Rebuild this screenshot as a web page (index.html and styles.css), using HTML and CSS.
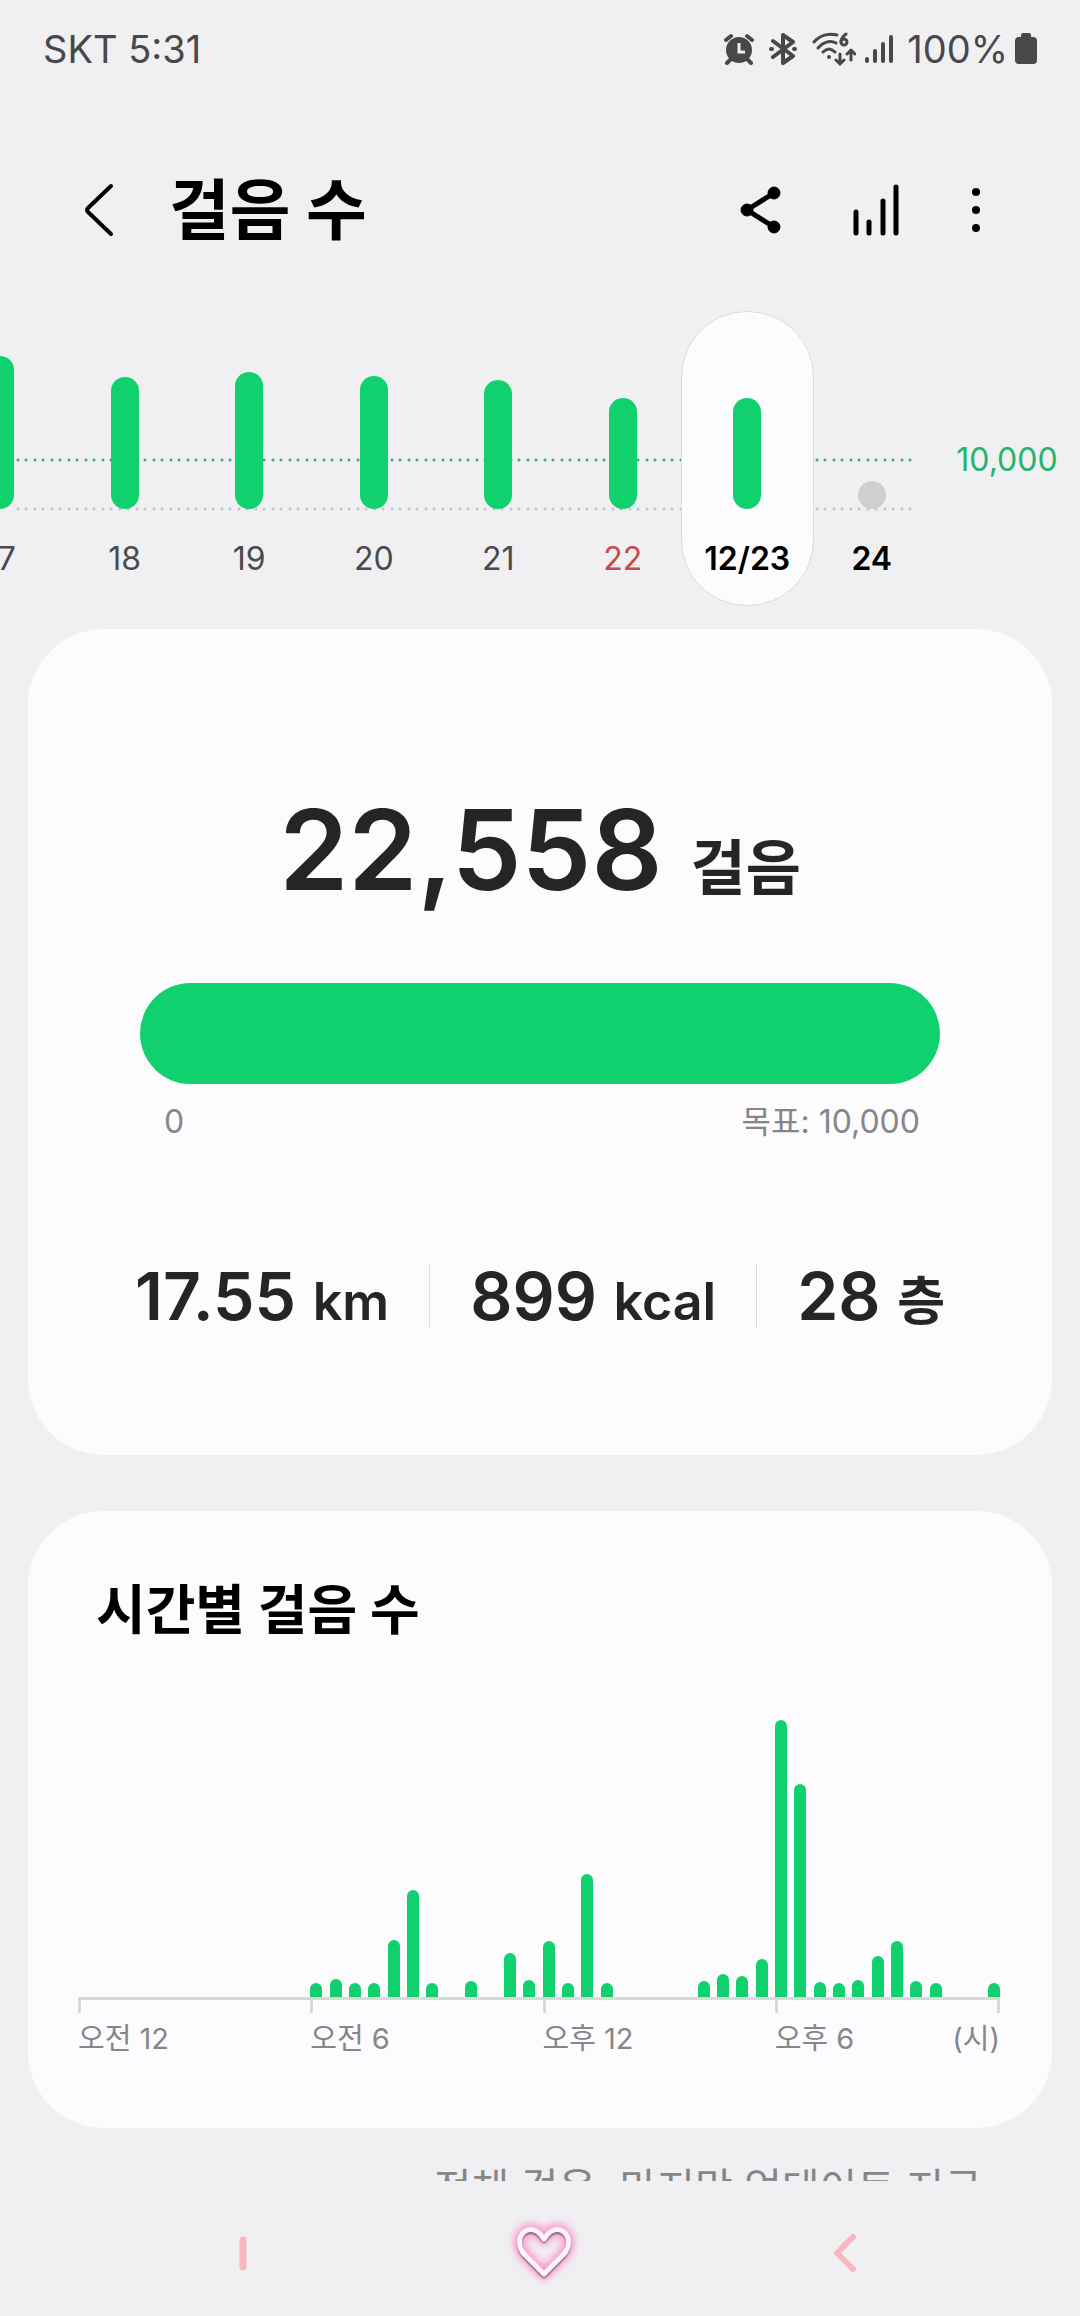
FILE: index.html
```html
<!DOCTYPE html>
<html lang="ko">
<head>
<meta charset="utf-8">
<meta name="viewport" content="width=device-width, initial-scale=1">
<title>걸음 수</title>
<link rel="stylesheet" href="styles.css">
</head>
<body>
<div class="app">
  <div class="status">
    <span class="status-text">SKT 5:31</span>
    <div class="status-icons">
      <svg class="icon-alarm" width="30" height="32" viewBox="0 0 30 32" aria-hidden="true">
        <circle cx="15" cy="17" r="13" fill="currentColor"/>
        <path d="M2 7 7 3M28 7 23 3M6 27 3 30M24 27 27 30" stroke="currentColor" stroke-width="4" stroke-linecap="round"/>
        <path d="M15 10v9h6" fill="none" stroke="#f0f0f2" stroke-width="3"/>
      </svg>
      <svg class="icon-bt" width="28" height="32" viewBox="0 0 28 32" fill="none" stroke="currentColor" stroke-width="4" stroke-linejoin="round" stroke-linecap="round" aria-hidden="true">
        <path d="M4 8 24 23 14 30V2L24 9 4 24"/>
        <path d="M2 16h1M25 16h1"/>
      </svg>
      <svg class="icon-wifi" width="44" height="34" viewBox="0 0 44 34" fill="none" stroke="currentColor" stroke-width="3" stroke-linecap="round" stroke-linejoin="round" aria-hidden="true">
        <path d="M2 10C8 3 17 1 25 3M6 16c5-6 12-8 18-5M11 20c4-4 8-4 12 0"/>
        <circle cx="17" cy="25" r="2" fill="currentColor" stroke="none"/>
        <path d="M34 2c-4 3-5 5-5 8"/><circle cx="32" cy="10" r="3"/>
        <path d="M28 22v10M24 28l4 4 4-4M39 28V19M35 22l4-4 4 4"/>
      </svg>
      <svg class="icon-signal" width="28" height="30" viewBox="0 0 28 30" stroke="currentColor" stroke-width="4" stroke-linecap="round" aria-hidden="true">
        <path d="M2 25v2M10 17v10M18 10v17M26 3v24"/>
      </svg>
      <span class="status-text">100%</span>
      <svg class="icon-battery" width="22" height="32" viewBox="0 0 22 32" fill="currentColor" aria-hidden="true">
        <rect x="6" y="0" width="10" height="8" rx="2"/><rect x="0" y="4" width="22" height="27" rx="4"/>
      </svg>
    </div>
  </div>

  <header class="header">
    <button class="icon-button" type="button" aria-label="뒤로">
      <svg width="32" height="56" viewBox="0 0 32 56" fill="none" stroke="currentColor" stroke-width="4" stroke-linecap="round" stroke-linejoin="round"><path d="M28 4 5 26q-2 2 0 4L28 52"/></svg>
    </button>
    <h1 class="title">걸음 수</h1>
    <div class="actions">
      <button class="icon-button" type="button" aria-label="공유">
        <svg width="42" height="48" viewBox="0 0 42 48" fill="currentColor" stroke="currentColor"><path d="M34 7 7 24 34 41" fill="none" stroke-width="5"/><circle cx="34" cy="7" r="6"/><circle cx="7" cy="24" r="6"/><circle cx="34" cy="41" r="6"/></svg>
      </button>
      <button class="icon-button" type="button" aria-label="통계">
        <svg width="48" height="52" viewBox="0 0 48 52" fill="none" stroke="currentColor" stroke-width="5" stroke-linecap="round"><path d="M4 28v21M17 38v11M31 17v32M44 3v46"/></svg>
      </button>
      <button class="icon-button" type="button" aria-label="더보기">
        <svg width="12" height="48" viewBox="0 0 12 48" fill="currentColor"><circle cx="6" cy="6" r="4"/><circle cx="6" cy="24" r="4"/><circle cx="6" cy="42" r="4"/></svg>
      </button>
    </div>
  </header>

  <main class="content">
    <section class="strip" aria-label="일별 걸음 수">
      <div class="days">
        <svg class="guides" aria-hidden="true">
          <line class="guide-goal" x1="18" y1="150" x2="100%" y2="150"/>
          <line class="guide-base" x1="18" y1="199" x2="100%" y2="199"/>
        </svg>
        <button class="day" type="button"><span class="plot"><span class="bar" style="height:153px"></span></span><span class="date">17</span></button>
        <button class="day" type="button"><span class="plot"><span class="bar" style="height:132px"></span></span><span class="date">18</span></button>
        <button class="day" type="button"><span class="plot"><span class="bar" style="height:137px"></span></span><span class="date">19</span></button>
        <button class="day" type="button"><span class="plot"><span class="bar" style="height:133px"></span></span><span class="date">20</span></button>
        <button class="day" type="button"><span class="plot"><span class="bar" style="height:129px"></span></span><span class="date">21</span></button>
        <button class="day sunday" type="button"><span class="plot"><span class="bar" style="height:111px"></span></span><span class="date">22</span></button>
        <button class="day selected" type="button" aria-pressed="true"><span class="plot"><span class="bar" style="height:111px"></span></span><span class="date">12/23</span></button>
        <button class="day today" type="button"><span class="plot"><span class="bar" style="height:28px"></span></span><span class="date">24</span></button>
      </div>
      <span class="goal-label">10,000</span>
    </section>

    <section class="card summary">
      <p class="total">22,558 <span class="total-unit">걸음</span></p>
      <div class="progress" role="progressbar" aria-label="걸음 수" aria-valuemin="0" aria-valuemax="10000" aria-valuenow="10000"></div>
      <div class="range"><span>0</span><span>목표: 10,000</span></div>
      <div class="stats">
        <span class="stat">17.55 <span class="unit">km</span></span>
        <span class="stat">899 <span class="unit">kcal</span></span>
        <span class="stat">28 <span class="unit">층</span></span>
      </div>
    </section>

    <section class="card hourly">
      <h2 class="card-title">시간별 걸음 수</h2>
      <div class="hours">
        <i></i><i></i><i></i><i></i><i></i><i></i><i></i><i></i><i></i><i></i><i></i><i></i>
        <i style="height:14px"></i><i style="height:18px"></i><i style="height:14px"></i><i style="height:14px"></i><i style="height:57px"></i><i style="height:107px"></i><i style="height:14px"></i><i></i><i style="height:16px"></i><i></i><i style="height:44px"></i><i style="height:17px"></i>
        <i style="height:56px"></i><i style="height:14px"></i><i style="height:123px"></i><i style="height:14px"></i><i></i><i></i><i></i><i></i><i style="height:16px"></i><i style="height:23px"></i><i style="height:21px"></i><i style="height:38px"></i>
        <i style="height:277px"></i><i style="height:213px"></i><i style="height:15px"></i><i style="height:14px"></i><i style="height:17px"></i><i style="height:41px"></i><i style="height:56px"></i><i style="height:16px"></i><i style="height:14px"></i><i></i><i></i><i style="height:14px"></i>
      </div>
      <div class="axis">
        <span class="tick">오전 12</span>
        <span class="tick">오전 6</span>
        <span class="tick">오후 12</span>
        <span class="tick tick-last"><span>오후 6</span><span>(시)</span></span>
      </div>
    </section>

    <p class="updated">전체 걸음, 마지막 업데이트 지금</p>
  </main>

  <nav class="nav">
    <button class="nav-button" type="button" aria-label="최근 앱">
      <svg width="8" height="40" viewBox="0 0 8 40"><path d="M4 7v27" stroke="#f9b6c1" stroke-width="7" stroke-linecap="round"/></svg>
    </button>
    <button class="nav-button" type="button" aria-label="홈">
      <svg width="80" height="80" viewBox="0 0 80 80" fill="none" stroke-linejoin="round">
        <defs><filter id="glow" x="-30%" y="-30%" width="160%" height="160%"><feGaussianBlur stdDeviation="4"/></filter><filter id="soft"><feGaussianBlur stdDeviation="1"/></filter></defs>
        <path d="M40 61 20 41C14 34 14 24 20 19 27 14 34 17 40 26 46 17 53 14 60 19 66 24 66 34 60 41Z" stroke="#ff8fcd" stroke-width="11" filter="url(#glow)"/>
        <path d="M40 63 20 43C14 36 14 26 20 21 27 16 34 19 40 28 46 19 53 16 60 21 66 26 66 36 60 43Z" stroke="#6d5364" stroke-width="4" filter="url(#soft)"/>
        <path d="M40 61 20 41C14 34 14 24 20 19 27 14 34 17 40 26 46 17 53 14 60 19 66 24 66 34 60 41Z" stroke="#fff5fb" stroke-width="5"/>
      </svg>
    </button>
    <button class="nav-button" type="button" aria-label="뒤로">
      <svg width="24" height="40" viewBox="0 0 24 40" fill="none"><path d="M20 4 4 20 20 36" stroke="#f9b6c1" stroke-width="6" stroke-linecap="round" stroke-linejoin="round"/></svg>
    </button>
  </nav>
</div>
</body>
</html>
```
FILE: styles.css
```css
* {
  box-sizing: border-box;
}

body {
  margin: 0;
  background: #f0f0f2;
  color: #000;
  font-family: "Inter", "Noto Sans CJK KR", sans-serif;
}

h1,
h2,
p {
  margin: 0;
}

button {
  margin: 0;
  padding: 0;
  border: 0;
  background: none;
  color: inherit;
  font: inherit;
}

svg {
  display: block;
}

.app {
  display: flex;
  flex-direction: column;
  height: 100vh;
}

/* status bar */
.status {
  display: flex;
  align-items: center;
  justify-content: space-between;
  flex: none;
  height: 98px;
  padding: 0 43px;
  color: #48484a;
}

.status-text {
  font-size: 38px;
  line-height: 48px;
}

.status-icons {
  display: flex;
  align-items: center;
}

.icon-alarm,
.icon-bt {
  margin-right: 15px;
}

.icon-wifi {
  margin-right: 9px;
}

.icon-signal {
  margin-right: 14px;
}

.icon-battery {
  margin-left: 7px;
}

/* header */
.header {
  display: flex;
  align-items: center;
  flex: none;
  height: 212px;
  padding: 12px 98px 0 83px;
}

.title {
  flex: 1;
  margin-left: 54px;
  font-size: 66px;
  font-weight: 700;
  line-height: 80px;
}

.actions {
  display: flex;
  align-items: center;
  gap: 70px;
}

.content {
  flex: 1;
  min-height: 0;
  overflow-y: auto;
  scrollbar-width: none;
}

/* daily strip */
.strip {
  display: flex;
  overflow: hidden;
}

.days {
  position: relative;
  display: flex;
  flex: 1;
  margin-left: -62px;
}

.guides {
  position: absolute;
  top: 0;
  left: 62px;
  width: calc(100% - 82px);
  height: 100%;
}

.guides line {
  stroke-width: 3;
  stroke-linecap: round;
  stroke-dasharray: 0 8 0 9;
}

.guide-goal {
  stroke: #2fae73;
}

.guide-base {
  stroke: #c4c4c6;
}

.day {
  position: relative;
  display: flex;
  flex: 1;
  flex-direction: column;
  align-items: center;
  padding-bottom: 30px;
  color: #4a4a4c;
}

.plot {
  position: relative;
  display: flex;
  align-items: flex-end;
  height: 199px;
}

.bar {
  width: 28px;
  border-radius: 14px;
  background: #11d16e;
}

.date {
  position: relative;
  margin-top: 32px;
  font-size: 32px;
  line-height: 36px;
}

.sunday {
  color: #c9484a;
}

.selected,
.today {
  color: #000;
  font-weight: 600;
}

.selected::before {
  content: "";
  position: absolute;
  inset: 1px -4px;
  border: 1px solid #dcdcde;
  border-radius: 66px;
  background: #fcfcfe;
}

.today .bar {
  background: #cfcfd0;
}

.goal-label {
  width: 146px;
  margin-top: 132px;
  color: #23b56b;
  font-size: 32px;
  line-height: 36px;
  text-align: center;
}

/* cards */
.card {
  margin: 0 28px;
  border-radius: 76px;
  background: #fcfcfe;
}

.summary {
  margin-top: 22px;
  padding: 157px 112px 127px;
  color: #252527;
}

.total {
  font-size: 111px;
  font-weight: 600;
  line-height: 128px;
  text-align: center;
}

.total-unit {
  font-size: 60px;
}

.progress {
  height: 101px;
  margin-top: 51px;
  border-radius: 51px;
  background: #11d16e;
}

.range {
  display: flex;
  justify-content: space-between;
  padding: 20px 20px 0 24px;
  color: #868688;
  font-size: 32px;
  line-height: 36px;
}

.stats {
  display: flex;
  justify-content: center;
  gap: 40px;
  margin-top: 124px;
}

.stat {
  height: 64px;
  font-size: 66px;
  font-weight: 600;
  line-height: 64px;
  white-space: nowrap;
}

.stat + .stat {
  padding-left: 40px;
  border-left: 1px solid #dcdcde;
}

.unit {
  font-size: 52px;
}

.hourly {
  margin-top: 56px;
  padding: 66px 52px 71px 50px;
}

.card-title {
  padding-left: 18px;
  font-size: 54px;
  font-weight: 700;
  line-height: 68px;
}

.hours {
  display: flex;
  align-items: flex-end;
  justify-content: space-between;
  height: 352px;
}

.hours i {
  width: 12px;
  border-radius: 6px 6px 0 0;
  background: #11d16e;
}

.axis {
  display: flex;
  border-top: 3px solid #d9d9db;
  color: #868688;
  font-size: 29px;
  line-height: 36px;
}

.tick {
  flex: 232 0 0;
  padding-top: 21px;
  background: linear-gradient(#d9d9db, #d9d9db) 0 0 / 3px 13px no-repeat;
}

.tick-last {
  display: flex;
  flex-grow: 225;
  justify-content: space-between;
  background: linear-gradient(#d9d9db, #d9d9db) 0 0 / 3px 13px no-repeat, linear-gradient(#d9d9db, #d9d9db) 100% 0 / 3px 13px no-repeat;
}

.updated {
  margin-top: 34px;
  padding: 0 98px 32px;
  color: #868688;
  font-size: 41px;
  line-height: 52px;
  text-align: right;
}

/* system navigation */
.nav {
  display: grid;
  grid-template-columns: repeat(3, 1fr);
  flex: none;
  height: 135px;
  padding: 8px 84px 0 92px;
}

.nav-button {
  display: grid;
  place-items: center;
}
```
